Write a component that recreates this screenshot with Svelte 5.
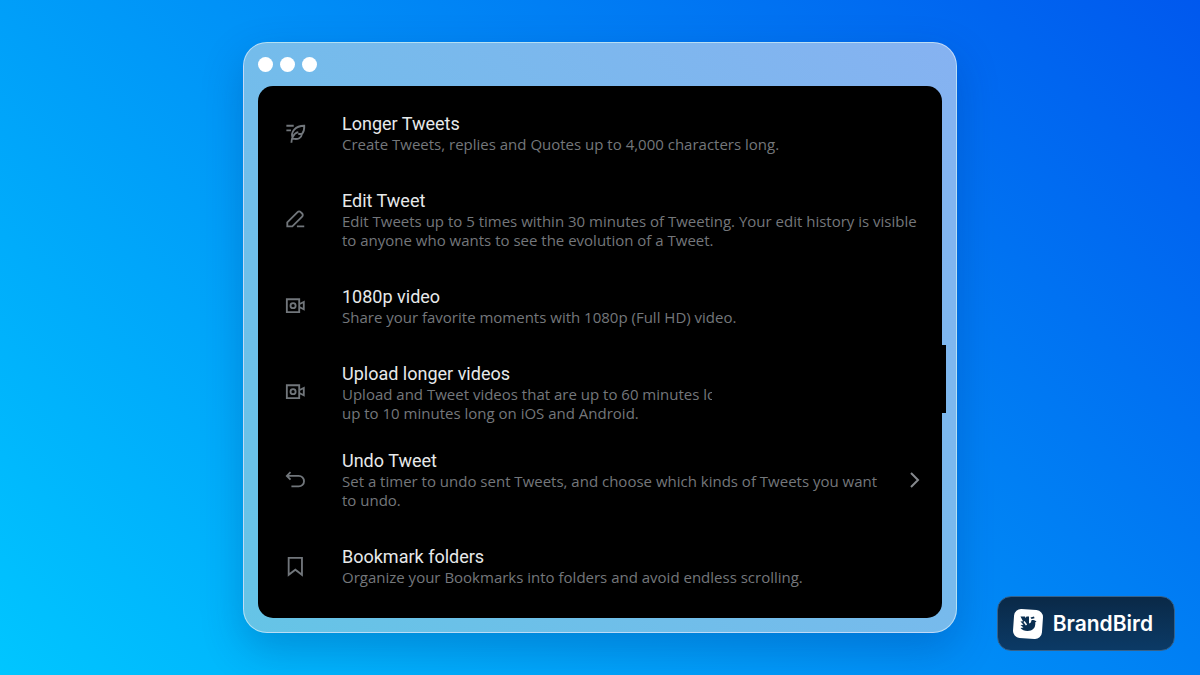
<script lang="ts">
  interface Feature {
    icon: 'feather' | 'pencil' | 'video' | 'undo' | 'bookmark'
    title: string
    lines: string[]
    href?: string
    covered?: boolean
  }

  const features: Feature[] = [
    {
      icon: 'feather',
      title: 'Longer Tweets',
      lines: ['Create Tweets, replies and Quotes up to 4,000 characters long.']
    },
    {
      icon: 'pencil',
      title: 'Edit Tweet',
      lines: [
        'Edit Tweets up to 5 times within 30 minutes of Tweeting. Your edit history is visible',
        'to anyone who wants to see the evolution of a Tweet.'
      ]
    },
    {
      icon: 'video',
      title: '1080p video',
      lines: ['Share your favorite moments with 1080p (Full HD) video.']
    },
    {
      icon: 'video',
      title: 'Upload longer videos',
      lines: [
        'Upload and Tweet videos that are up to 60 minutes lo',
        'up to 10 minutes long on iOS and Android.'
      ],
      covered: true
    },
    {
      icon: 'undo',
      title: 'Undo Tweet',
      lines: [
        'Set a timer to undo sent Tweets, and choose which kinds of Tweets you want',
        'to undo.'
      ],
      href: '#undo-tweet'
    },
    {
      icon: 'bookmark',
      title: 'Bookmark folders',
      lines: ['Organize your Bookmarks into folders and avoid endless scrolling.']
    }
  ]
</script>

{#snippet featureIcon(name: Feature['icon'])}
  <svg class="icon" viewBox="0 0 24 24" aria-hidden="true">
    {#if name === 'feather'}
      <path d="M1.500 3h8M1.500 8h5M7 21.500c0-2.500.5-4.500 1.500-6.500 1.500-3 3.500-4.500 6-5M8.500 17C5.500 9.500 11.500 3 21 3c.3 4-.5 6.500-2.500 9-.5 4-4 6.500-10 5M14.500 12H18.500" />
    {:else if name === 'pencil'}
      <path d="M2.500 14.500 13.700 3.300a2.400 2.400 0 0 1 3.400 0l1.600 1.600a2.400 2.400 0 0 1 0 3.400L8 19H2.500zM13 19h8" />
    {:else if name === 'video'}
      <path d="M2 3.500h13.500v14H2zM15.500 9 20.500 6.500v8L15.500 12" />
      <circle cx="8.800" cy="10.500" r="2.800" />
    {:else if name === 'undo'}
      <path d="M6 3.500 2 7.500l4 4M2.500 7.500H15a5.500 5.500 0 0 1 0 11.500H7" />
    {:else}
      <path d="M4 2h14.500v18.500L11.300 15 4 20.500z" />
    {/if}
  </svg>
{/snippet}

{#snippet body(feature: Feature)}
  {@render featureIcon(feature.icon)}
  <div class="text">
    <h2>{feature.title}</h2>
    <p>
      {#each feature.lines as line}
        <span>{line}</span>
      {/each}
    </p>
  </div>
{/snippet}

<main class="stage">
  <section class="window">
    <div class="titlebar">
      <span class="dot"></span>
      <span class="dot"></span>
      <span class="dot"></span>
    </div>
    <ul class="panel">
      {#each features as feature}
        <li class:covered={feature.covered}>
          {#if feature.href}
            <a class="row" href={feature.href}>
              {@render body(feature)}
              <svg class="chevron" viewBox="0 0 12 18" aria-hidden="true">
                <path d="M2 2l7 7-7 7" />
              </svg>
            </a>
          {:else}
            <div class="row">
              {@render body(feature)}
            </div>
          {/if}
        </li>
      {/each}
    </ul>
  </section>

  <div class="badge">
    <svg class="logo" viewBox="0 0 32 32" aria-hidden="true">
      <rect x="1.500" y="1.500" width="29" height="29" rx="7" transform="rotate(4 16 16)" fill="#fff" />
      <path
        d="M8.500 8.500h4.500l.5 1.500 1-1.500h2.500v7c1.800-.3 2.300-1.500 2.300-3 1.500-.8 3-.6 4 .2l1.200.8-1.200.8c.4 6-2.800 8.700-7.800 8.700-3 0-5.500-1-7-3l3-.5-3-2.500 3-.3-3-3.200 2.500-.3z"
        fill="#0a2e50"
      />
      <path d="M18.500 9.500l3.500-1 .5 1.700-3 .8z" fill="#0a2e50" />
      <path d="M12 13.500l2.500 3.500" stroke="#fff" stroke-width="1.500" fill="none" />
    </svg>
    <span>BrandBird</span>
  </div>
</main>

<style>
  :global(body) {
    margin: 0;
  }

  .stage {
    position: relative;
    box-sizing: border-box;
    min-height: 100vh;
    padding: 24px;
    display: flex;
    align-items: center;
    justify-content: center;
    background: linear-gradient(45deg, #00c6ff, #0058ee);
    font-family: Roboto, 'Liberation Sans', sans-serif;
  }

  .window {
    box-sizing: border-box;
    width: 100%;
    max-width: 714px;
    padding: 0 14px 14px;
    border: 1px solid rgba(255, 255, 255, 0.5);
    border-radius: 24px;
    background: linear-gradient(45deg, #65c4e6, #86b2f1);
    box-shadow: 0 16px 40px rgba(0, 40, 110, 0.25);
  }

  .titlebar {
    display: flex;
    align-items: center;
    gap: 7px;
    height: 43px;
  }

  .dot {
    width: 15px;
    height: 15px;
    border-radius: 50%;
    background: #fff;
  }

  .panel {
    margin: 0;
    padding: 9px 0 13px;
    list-style: none;
    border-radius: 15px;
    background: #000;
  }

  .row {
    display: flex;
    align-items: center;
    padding: 18px 21px 18px 27px;
    color: inherit;
    text-decoration: none;
  }

  .covered {
    position: relative;
  }

  .covered .row {
    padding-bottom: 9px;
  }

  /* black patch that hides the end of the first line */
  .covered::after {
    content: '';
    position: absolute;
    top: 0;
    right: -4px;
    width: 234px;
    height: 68px;
    background: #000;
  }

  .icon {
    flex: none;
    width: 22px;
    height: 22px;
    margin-right: 35px;
    fill: none;
    stroke: #71767b;
    stroke-width: 2;
  }

  .text {
    flex: 1;
    min-width: 0;
  }

  h2 {
    margin: 0;
    font-size: 18px;
    font-weight: 400;
    line-height: 22px;
    color: #e7e9ea;
  }

  p {
    margin: 0;
    font-family: 'Open Sans', sans-serif;
    font-size: 15px;
    line-height: 19px;
    color: #74777b;
  }

  p span {
    display: block;
    white-space: nowrap;
  }

  .chevron {
    flex: none;
    width: 12px;
    height: 18px;
    fill: none;
    stroke: #85898d;
    stroke-width: 2;
  }

  .badge {
    position: absolute;
    right: 25px;
    bottom: 24px;
    box-sizing: border-box;
    display: flex;
    align-items: center;
    gap: 9px;
    height: 55px;
    padding: 0 21px 0 14px;
    border: 1px solid #35618a;
    border-radius: 14px;
    background: linear-gradient(#0a2947, #0b3a66);
    color: #fff;
    font-family: Inter, sans-serif;
    font-size: 21px;
    font-weight: 600;
  }

  .logo {
    width: 32px;
    height: 32px;
  }
</style>
